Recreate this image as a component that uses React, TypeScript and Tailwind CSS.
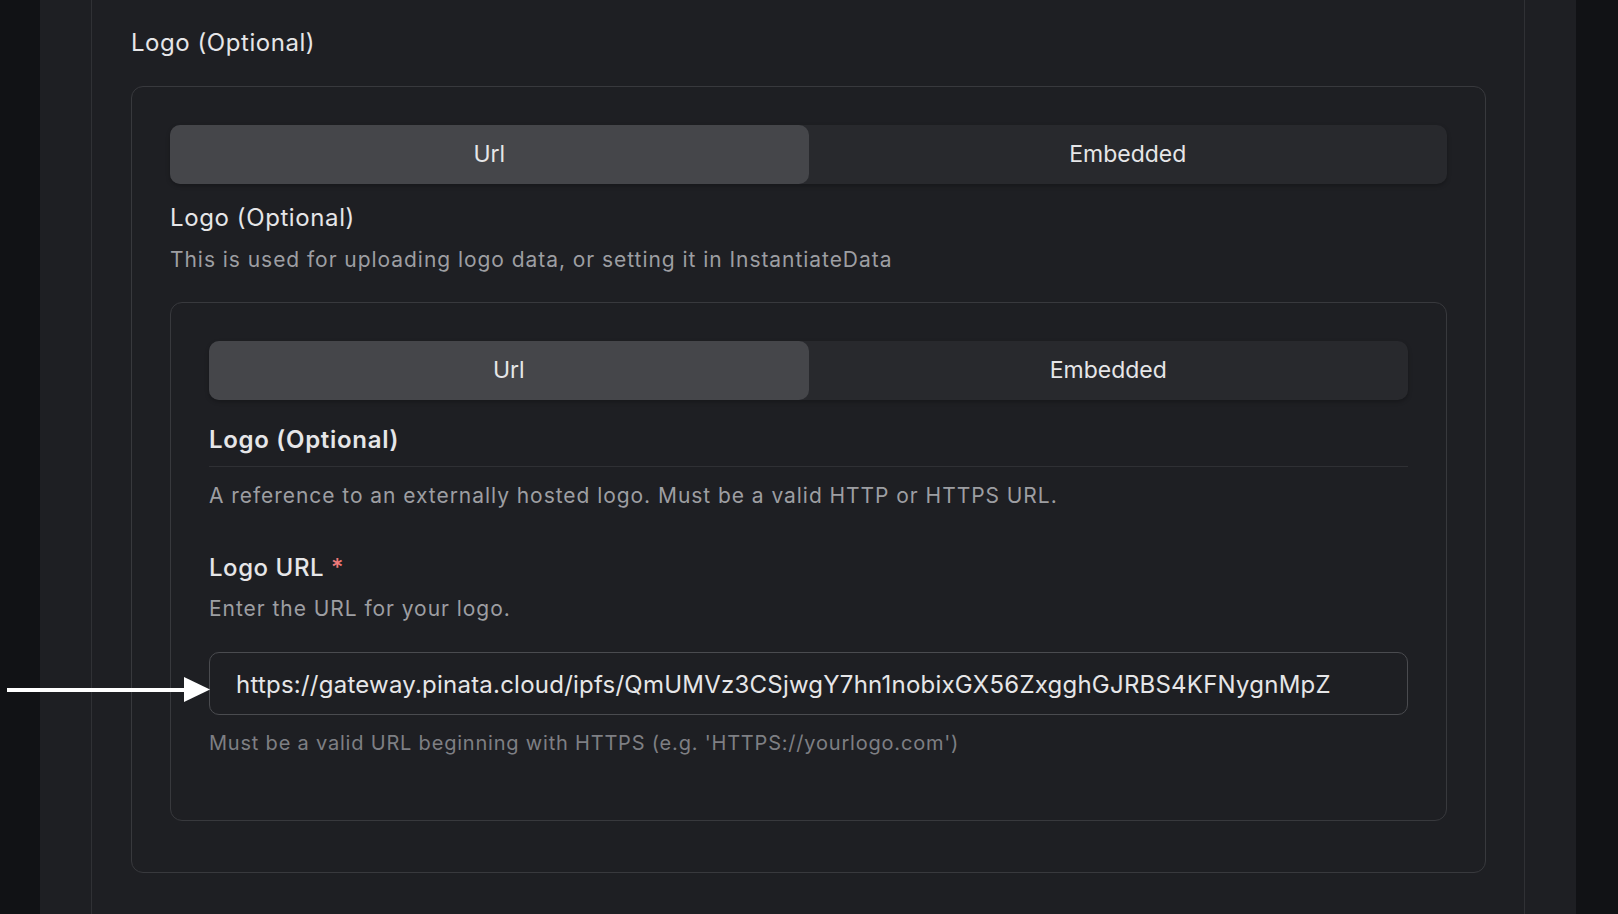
import React from "react";

function Tabs({ active = "Url" }: { active?: string }) {
  const tabs = ["Url", "Embedded"];
  return (
    <div className="flex h-[59px] w-full rounded-[10px] bg-[#28292d] shadow-[0_2px_4px_rgba(0,0,0,0.25)]">
      {tabs.map((t) => (
        <div
          key={t}
          className={
            t === active
              ? "flex flex-1 items-center justify-center rounded-[10px] bg-[#45464a] text-[23px] text-[#e6e6e8]"
              : "flex flex-1 items-center justify-center rounded-[10px] text-[23px] text-[#e6e6e8]"
          }
        >
          {t}
        </div>
      ))}
    </div>
  );
}

export default function App() {
  return (
    <div className="relative h-screen overflow-hidden bg-[#111215] font-['Inter',sans-serif]">
      <div className="ml-[40px] h-full w-[1536px] bg-[#1e1f23] px-[51px]">
        <div className="h-full border-x border-[#303135] pl-[39px] pr-[38px] pt-[27px]">
          <h2 className="text-[24px] leading-[32px] tracking-[0.55px] text-[#e6e6e8]">Logo (Optional)</h2>

          {/* outer card */}
          <div className="mt-[27px] rounded-[12px] border border-[#38393d] px-[38px] pb-[51px] pt-[38px]">
            <Tabs />
            <p className="mt-[18px] text-[24px] leading-[32px] tracking-[0.6px] text-[#e6e6e8]">Logo (Optional)</p>
            <p className="mt-[12px] text-[21px] leading-[28px] tracking-[0.95px] text-[#9d9ea2]">
              This is used for uploading logo data, or setting it in InstantiateData
            </p>

            {/* inner card */}
            <div className="mt-[28px] rounded-[12px] border border-[#38393d] px-[38px] pb-[38px] pt-[38px]">
              <Tabs />
              <h3 className="mt-[24px] border-b border-[#2f3034] pb-[10px] text-[24px] font-semibold leading-[32px] tracking-[0.7px] text-[#e6e6e8]">
                Logo (Optional)
              </h3>
              <p className="mt-[15px] text-[21px] leading-[28px] tracking-[0.95px] text-[#9d9ea2]">
                A reference to an externally hosted logo. Must be a valid HTTP or HTTPS URL.
              </p>

              <label className="mt-[42px] block text-[24px] font-medium leading-[32px] tracking-[0.55px] text-[#e6e6e8]">
                Logo URL <span className="text-[#f07a7a]">*</span>
              </label>
              <p className="mt-[11px] text-[21px] leading-[28px] tracking-[0.95px] text-[#9d9ea2]">
                Enter the URL for your logo.
              </p>

              <div className="mt-[29px] flex h-[63px] items-center rounded-[10px] border border-[#4a4b4f] px-[26px] pt-[3px] text-[24px] tracking-[0.23px] text-[#e6e6e8]">
                https://gateway.pinata.cloud/ipfs/QmUMVz3CSjwgY7hn1nobixGX56ZxgghGJRBS4KFNygnMpZ
              </div>
              <p className="mb-[25px] mt-[14px] text-[20px] leading-[28px] tracking-[0.8px] text-[#7e7f84]">
                Must be a valid URL beginning with HTTPS (e.g. 'HTTPS://yourlogo.com')
              </p>
            </div>
          </div>
        </div>
      </div>

      {/* annotation arrow */}
      <div className="absolute left-[7px] top-[688px] h-[4px] w-[180px] bg-white" />
      <svg className="absolute left-[184px] top-[677px]" width="26" height="25" viewBox="0 0 26 25">
        <polygon points="0,0 26,12.5 0,25" fill="#ffffff" />
      </svg>
    </div>
  );
}
